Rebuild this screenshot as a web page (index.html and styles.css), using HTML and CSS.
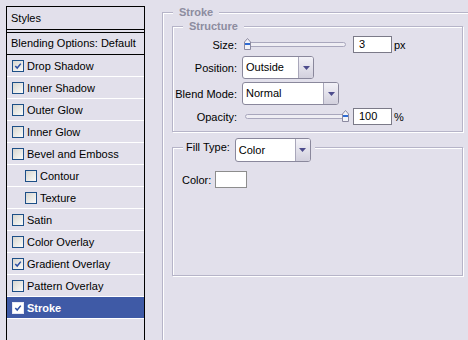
FILE: index.html
```html
<!DOCTYPE html>
<html>
<head>
<meta charset="utf-8">
<link rel="stylesheet" href="styles.css">
</head>
<body>
<div class="dialog">
  <aside class="styles-panel">
    <div class="panel-title">Styles</div>
    <div class="panel-blend">Blending Options: Default</div>
    <ul class="fx-list">
      <li class="fx"><span class="cb"><svg width="10" height="10" viewBox="0 0 10 10"><path d="M2.3 4.9 L4.2 7 L7.8 2.6" fill="none" stroke="#2b4ea3" stroke-width="1.5"/></svg></span>Drop Shadow</li>
      <li class="fx"><span class="cb"></span>Inner Shadow</li>
      <li class="fx"><span class="cb"></span>Outer Glow</li>
      <li class="fx"><span class="cb"></span>Inner Glow</li>
      <li class="fx"><span class="cb"></span>Bevel and Emboss</li>
      <li class="fx sub"><span class="cb"></span>Contour</li>
      <li class="fx sub"><span class="cb"></span>Texture</li>
      <li class="fx"><span class="cb"></span>Satin</li>
      <li class="fx"><span class="cb"></span>Color Overlay</li>
      <li class="fx"><span class="cb"><svg width="10" height="10" viewBox="0 0 10 10"><path d="M2.3 4.9 L4.2 7 L7.8 2.6" fill="none" stroke="#2b4ea3" stroke-width="1.5"/></svg></span>Gradient Overlay</li>
      <li class="fx"><span class="cb"></span>Pattern Overlay</li>
      <li class="fx active"><span class="cb cb-light"><svg width="10" height="10" viewBox="0 0 10 10"><path d="M2.3 4.9 L4.2 7 L7.8 2.6" fill="none" stroke="#2b4ea3" stroke-width="1.5"/></svg></span>Stroke</li>
    </ul>
  </aside>

  <main class="settings">
    <fieldset class="group group-stroke">
      <legend>Stroke</legend>

      <fieldset class="group group-structure">
        <legend>Structure</legend>
        <div class="form">
          <label>Size:</label>
          <div class="ctrl">
            <div class="slider">
              <div class="slider-track"></div>
              <svg class="slider-thumb thumb-min" width="7" height="12" viewBox="0 0 7 12"><path d="M0.5 4 L3.5 0.5 L6.5 4 V11.5 H0.5 Z" fill="#f3f3f7" stroke="#8c8aa0"/><rect x="1" y="5" width="5" height="2" fill="#2f6bd3"/></svg>
            </div>
            <span class="num">3</span><span class="unit">px</span>
          </div>

          <label>Position:</label>
          <div class="ctrl">
            <div class="select w-pos"><span class="select-value">Outside</span><span class="select-btn"><svg width="7" height="4" viewBox="0 0 7 4"><path d="M0 0 H7 L3.5 4 Z" fill="#4d4c8c"/></svg></span></div>
          </div>

          <label>Blend Mode:</label>
          <div class="ctrl">
            <div class="select w-blend"><span class="select-value">Normal</span><span class="select-btn"><svg width="7" height="4" viewBox="0 0 7 4"><path d="M0 0 H7 L3.5 4 Z" fill="#4d4c8c"/></svg></span></div>
          </div>

          <label>Opacity:</label>
          <div class="ctrl">
            <div class="slider">
              <div class="slider-track"></div>
              <svg class="slider-thumb thumb-max" width="7" height="12" viewBox="0 0 7 12"><path d="M0.5 4 L3.5 0.5 L6.5 4 V11.5 H0.5 Z" fill="#f3f3f7" stroke="#8c8aa0"/><rect x="1" y="5" width="5" height="2" fill="#2f6bd3"/></svg>
            </div>
            <span class="num">100</span><span class="unit">%</span>
          </div>
        </div>
      </fieldset>

      <fieldset class="group group-fill">
        <legend class="fill-legend"><span>Fill Type:</span><span class="select w-fill"><span class="select-value">Color</span><span class="select-btn"><svg width="7" height="4" viewBox="0 0 7 4"><path d="M0 0 H7 L3.5 4 Z" fill="#4d4c8c"/></svg></span></span></legend>
        <div class="color-row">
          <span>Color:</span>
          <span class="swatch"></span>
        </div>
      </fieldset>
    </fieldset>
  </main>
</div>
</body>
</html>
```

FILE: styles.css
```css
* { box-sizing: border-box; }

html, body {
  margin: 0;
  height: 340px;
  overflow: hidden;
}

body {
  background: #e2e0eb;
  font-family: "Liberation Sans", Arial, sans-serif;
  font-size: 11px;
  color: #000;
}

.dialog {
  display: flex;
  align-items: flex-start;
  height: 340px;
}

/* ---------- left styles list ---------- */
.styles-panel {
  flex: none;
  margin: 6px 0 0 6px;
  width: 139px;
  height: 334px;
  border: 1px solid #000;
  border-bottom: none;
}

.panel-title {
  height: 23px;
  line-height: 22px;
  padding-left: 4px;
  border-bottom: 1px solid #000;
}

.panel-blend {
  margin-top: 2px;
  height: 23px;
  line-height: 21px;
  padding-left: 4px;
  border-top: 1px solid #000;
  border-bottom: 1px solid #000;
}

.fx-list {
  list-style: none;
  margin: 0;
  padding: 0;
}

.fx {
  display: flex;
  align-items: center;
  height: 22px;
  padding-left: 5px;
  border-bottom: 1px solid #fff;
}

.fx.sub { padding-left: 18px; }

.fx.active {
  background: #3f5aa6;
  color: #fff;
  font-weight: bold;
}

.cb {
  flex: none;
  display: grid;
  place-items: center;
  width: 12px;
  height: 12px;
  margin-right: 3px;
  border: 1px solid #1d4f87;
  background: linear-gradient(135deg, #d7d6d0, #fbfbf9);
}

.cb-light {
  border-color: #e6e9f4;
  background: #fff;
}

/* ---------- right settings ---------- */
.settings { flex: none; }

.group {
  margin: 0;
  padding: 0;
  min-width: 0;
  border: 1px solid #b6b4c8;
  box-shadow: inset 1px 1px 0 #fff, 1px 1px 0 #fff;
}

.group > legend {
  padding: 0 6px;
  background: #e2e0eb;
  color: #8d8c9f;
  font-weight: bold;
  line-height: 13px;
}

.group-stroke {
  margin: 6px 0 0 17px;
  padding-left: 9px;
  width: 306px;
  height: 334px;
  border-right: none;
  border-bottom: none;
  box-shadow: inset 1px 1px 0 #fff;
}

.group-stroke > legend { margin-left: 1px; }

.group-structure {
  margin-top: 1px;
  width: 291px;
}

.group-structure > legend { margin-left: 10px; }

.form {
  display: grid;
  grid-template-columns: 64px auto;
  grid-template-rows: 17px 23px 23px 17px;
  column-gap: 5px;
  row-gap: 3px;
  align-items: center;
  padding: 3px 0 6px;
}

.form label { text-align: right; }

.ctrl {
  display: flex;
  align-items: center;
}

.slider {
  position: relative;
  width: 104px;
  height: 17px;
}

.slider-track {
  position: absolute;
  left: 3px;
  right: 0;
  top: 6px;
  height: 5px;
  border: 1px solid #a9a7bd;
  border-radius: 3px;
  background: #efeef4;
}

.slider-thumb {
  position: absolute;
  top: 2px;
}

.thumb-min { left: 2px; }
.thumb-max { left: 100px; }

.num {
  width: 39px;
  height: 17px;
  margin-left: 7px;
  padding-left: 5px;
  line-height: 15px;
  border: 1px solid #7b7a88;
  background: #fff;
}

.unit { margin-left: 2px; }

.select {
  display: flex;
  height: 23px;
  border: 1px solid #8a889c;
  border-radius: 3px;
  background: #fff;
  overflow: hidden;
}

.select-value {
  flex: 1;
  padding-left: 3px;
  line-height: 21px;
}

.select-btn {
  display: grid;
  place-items: center;
  width: 15px;
  border-left: 1px solid #a9a7ba;
  background: linear-gradient(#f3f2f8, #d2d0dd);
}

.w-pos { width: 72px; }
.w-blend { width: 97px; }

.group-fill {
  margin-top: 6px;
  width: 291px;
  height: 138px;
}

.group-fill > .fill-legend {
  display: flex;
  align-items: flex-start;
  height: 18px;
  margin-left: 10px;
  padding: 0 4px 0 3px;
  color: #000;
  font-weight: normal;
  line-height: 18px;
}

.fill-legend .w-fill {
  width: 76px;
  height: 24px;
  margin-left: 5px;
}

.fill-legend .select-value { line-height: 22px; }

.color-row {
  display: flex;
  align-items: center;
  gap: 4px;
  margin-top: 15px;
  padding-left: 9px;
}

.swatch {
  width: 32px;
  height: 17px;
  border: 1px solid #8d8d8d;
  background: #fff;
}
```
